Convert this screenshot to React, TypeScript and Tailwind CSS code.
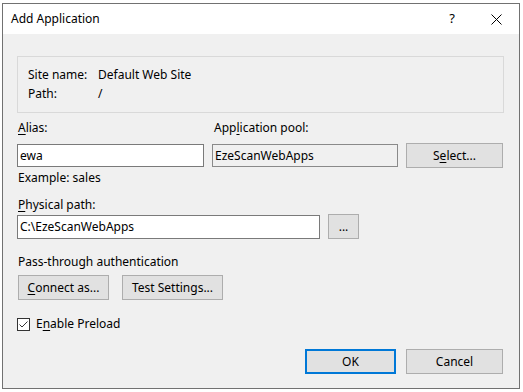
import React from 'react';

const font = { fontFamily: '"Segoe UI", "Noto Sans", "Open Sans", sans-serif' };

const Key = ({ children }: { children: React.ReactNode }) => (
  <span className="underline underline-offset-2">{children}</span>
);

const Btn = ({ children, className = '' }: { children: React.ReactNode; className?: string }) => (
  <button className={`h-[25px] bg-[#e1e1e1] border border-[#adadad] text-[12px] text-black flex items-center justify-center ${className}`}>
    {children}
  </button>
);

export default function App() {
  return (
    <div className="w-[523px] h-[392px] bg-white overflow-hidden text-black" style={font}>
      <div className="ml-[2px] mt-[3px] w-[518px] h-[386px] border border-[#717171] bg-[#f0f0f0] flex flex-col">
        {/* title bar */}
        <div className="h-[30px] bg-white flex items-center text-[12px]">
          <span className="ml-[8px]">Add Application</span>
          <span className="ml-auto mr-[36px] text-[13px]">?</span>
          <svg width="11" height="11" viewBox="0 0 11 11" className="mr-[17px]">
            <path d="M0.5 0.5L10.5 10.5M10.5 0.5L0.5 10.5" stroke="#000" strokeWidth="1" />
          </svg>
        </div>

        <div className="pl-[14px] pr-[15px] flex flex-col text-[12px] leading-[16px]">
          {/* site info */}
          <div className="mt-[22px] h-[57px] border border-[#d9d9d9] pl-[10px] pt-[10px] flex flex-col gap-[3px]">
            <div className="flex">
              <span className="w-[70px]">Site name:</span>
              <span>Default Web Site</span>
            </div>
            <div className="flex">
              <span className="w-[70px]">Path:</span>
              <span>/</span>
            </div>
          </div>

          {/* alias + pool */}
          <div className="mt-[7px] flex">
            <span className="w-[197px] pl-[1px]"><Key>A</Key>lias:</span>
            <span>App<Key>l</Key>ication pool:</span>
          </div>
          <div className="mt-[7px] flex items-center">
            <div className="w-[187px] h-[23px] bg-white border border-[#7a7a7a] flex items-center pl-[2px]">ewa</div>
            <div className="ml-[8px] w-[186px] h-[23px] bg-[#f0f0f0] border border-[#8a8a8a] flex items-center pl-[2px]">EzeScanWebApps</div>
            <Btn className="ml-[8px] w-[97px]">S<Key>e</Key>lect...</Btn>
          </div>

          <div className="mt-[2px] pl-[1px]">Example: sales</div>

          <div className="mt-[11px] pl-[1px]"><Key>P</Key>hysical path:</div>
          <div className="mt-[1px] flex items-center">
            <div className="w-[303px] h-[24px] bg-white border border-[#7a7a7a] flex items-center pl-[2px]">C:\EzeScanWebApps</div>
            <Btn className="ml-[8px] w-[31px]">...</Btn>
          </div>

          <div className="mt-[15px] pl-[1px]">Pass-through authentication</div>
          <div className="mt-[5px] flex pl-[1px]">
            <Btn className="w-[91px]"><Key>C</Key>onnect as...</Btn>
            <Btn className="ml-[13px] w-[101px]">Test Settings...</Btn>
          </div>

          <div className="mt-[16px] flex items-center">
            <div className="w-[13px] h-[13px] bg-white border border-[#333] flex items-center justify-center">
              <svg width="11" height="11" viewBox="0 0 11 11">
                <path d="M1.5 5.5L4 8L9.5 2.5" stroke="#333" strokeWidth="1" fill="none" />
              </svg>
            </div>
            <span className="ml-[6px]">E<Key>n</Key>able Preload</span>
          </div>

          <div className="mt-[17px] flex justify-end pr-[1px]">
            <button className="w-[91px] h-[25px] bg-[#e1e1e1] border-2 border-[#0078d7] text-[12px] flex items-center justify-center">OK</button>
            <Btn className="ml-[10px] w-[97px]">Cancel</Btn>
          </div>
        </div>
      </div>
    </div>
  );
}
